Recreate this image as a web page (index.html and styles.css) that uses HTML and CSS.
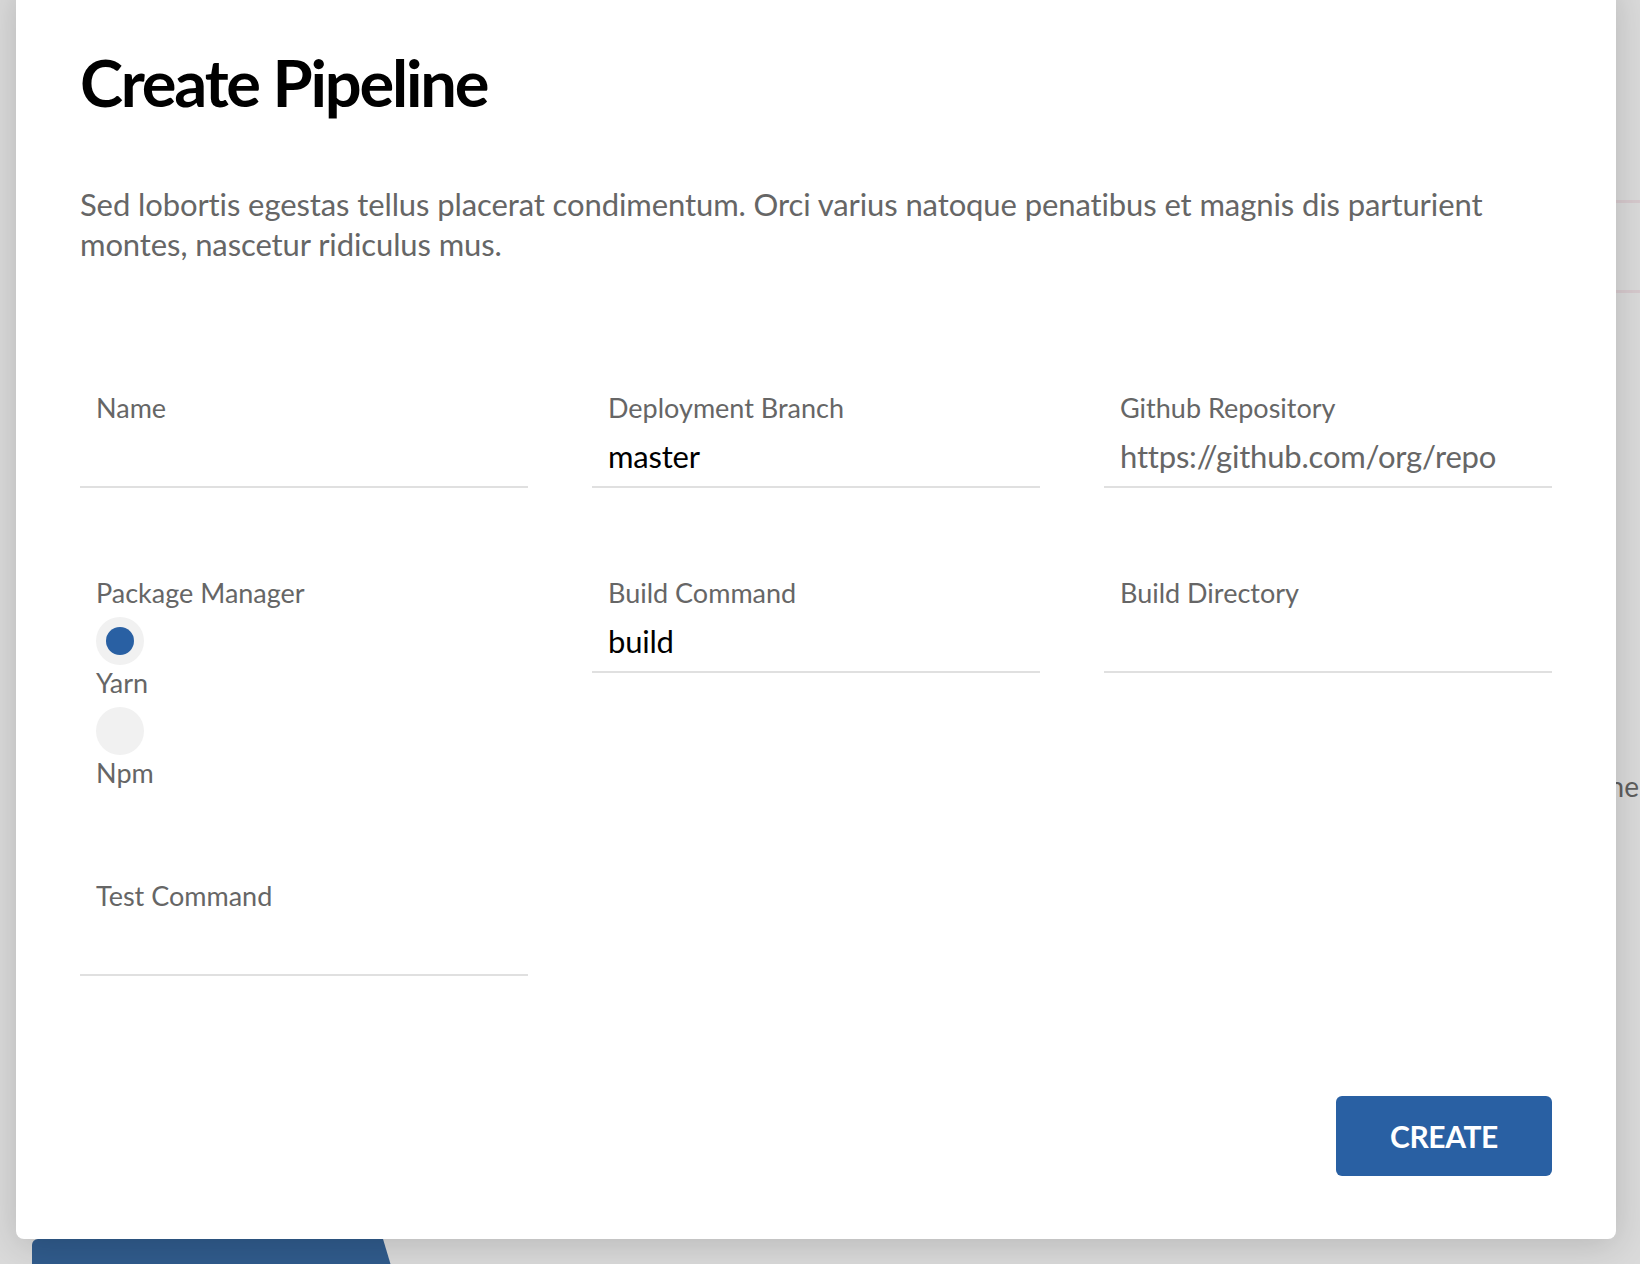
FILE: index.html
```html
<!DOCTYPE html>
<html lang="en">
<head>
<meta charset="utf-8">
<title>Create Pipeline</title>
<link rel="stylesheet" href="styles.css">
</head>
<body>
<div class="page">
  <div class="page-rows"></div>
  <div class="page-text">Pipeline</div>
  <div class="page-tab"></div>

  <div class="modal">
    <h1 class="modal-title">Create Pipeline</h1>
    <p class="modal-desc">Sed lobortis egestas tellus placerat condimentum. Orci varius natoque penatibus et magnis dis parturient montes, nascetur ridiculus mus.</p>

    <form class="form-grid">
      <div class="field">
        <label class="field-label">Name</label>
        <input class="field-input" type="text" value="">
      </div>
      <div class="field">
        <label class="field-label">Deployment Branch</label>
        <input class="field-input" type="text" value="master">
      </div>
      <div class="field">
        <label class="field-label">Github Repository</label>
        <input class="field-input" type="text" placeholder="https://github.com/org/repo">
      </div>

      <div class="field">
        <label class="field-label">Package Manager</label>
        <div class="radio-group">
          <div class="radio-item">
            <span class="radio radio-checked"><span class="radio-dot"></span></span>
            <span class="radio-label">Yarn</span>
          </div>
          <div class="radio-item">
            <span class="radio"></span>
            <span class="radio-label">Npm</span>
          </div>
        </div>
      </div>
      <div class="field">
        <label class="field-label">Build Command</label>
        <input class="field-input" type="text" value="build">
      </div>
      <div class="field">
        <label class="field-label">Build Directory</label>
        <input class="field-input" type="text" value="">
      </div>

      <div class="field">
        <label class="field-label">Test Command</label>
        <input class="field-input" type="text" value="">
      </div>
    </form>

    <div class="actions">
      <button class="btn-create" type="button">CREATE</button>
    </div>
  </div>
</div>
</body>
</html>
```

FILE: styles.css
```css
* { box-sizing: border-box; }

html, body {
  margin: 0;
  padding: 0;
}

body {
  background: #d9d9d9;
  font-family: Lato, "Open Sans", sans-serif;
  width: 1640px;
  height: 1264px;
  overflow: hidden;
}

.page {
  position: relative;
  width: 1640px;
  height: 1264px;
  overflow: hidden;
  background: #dadada;
}

/* dimmed page beneath the dialog */
.page-rows {
  margin: 200px 0 0 auto;
  width: 600px;
  height: 93px;
  border-top: 3px solid #d6c9cd;
  border-bottom: 3px solid #d6c9cd;
}

.page-text {
  margin-top: 475px;
  padding-right: 1px;
  text-align: right;
  font-size: 28px;
  line-height: 36px;
  color: #5e5e5e;
}

.page-tab {
  margin: 435px 0 0 32px;
  width: 360px;
  height: 40px;
  background: #305b8c;
  border-radius: 6px 6px 0 0;
  clip-path: polygon(0 0, 351px 0, 360px 30px, 360px 40px, 0 40px);
}

/* dialog */
.modal {
  position: absolute;
  left: 16px;
  top: -16px;
  width: 1600px;
  padding: 58px 64px 63px 64px;
  background: #fff;
  border-radius: 8px;
  box-shadow: 0 6px 36px rgba(0, 0, 0, 0.16);
}

.modal-title {
  margin: 0;
  font-size: 65px;
  line-height: 80px;
  font-weight: 700;
  color: #000;
  letter-spacing: -2.2px;
}

.modal-desc {
  margin: 62px 0 0 0;
  font-size: 31px;
  line-height: 40px;
  color: #666;
  letter-spacing: -0.1px;
}

.form-grid {
  margin-top: 126px;
  display: grid;
  grid-template-columns: repeat(3, 448px);
  column-gap: 64px;
  row-gap: 87px;
  align-items: start;
}

.field {
  display: flex;
  flex-direction: column;
}

.field-label {
  display: block;
  padding-left: 16px;
  font-size: 27px;
  line-height: 36px;
  color: #666;
}

.field-input {
  display: block;
  width: 100%;
  height: 62px;
  margin: 0;
  padding: 10px 16px 10px 16px;
  border: 0;
  border-bottom: 2px solid #e0e0e0;
  background: transparent;
  font-family: Lato, "Open Sans", sans-serif;
  font-size: 31px;
  line-height: 40px;
  color: #000;
  letter-spacing: -0.2px;
  outline: none;
}

.field-input::placeholder {
  color: #666;
  opacity: 1;
}

.radio-group {
  display: flex;
  flex-direction: column;
  gap: 6px;
  padding-top: 6px;
  padding-left: 16px;
}

.radio-item {
  display: flex;
  flex-direction: column;
  align-items: flex-start;
}

.radio {
  width: 48px;
  height: 48px;
  border-radius: 50%;
  background: #f1f1f1;
  display: flex;
  align-items: center;
  justify-content: center;
}

.radio-dot {
  width: 28px;
  height: 28px;
  border-radius: 50%;
  background: #2960a3;
}

.radio-label {
  font-size: 27px;
  line-height: 36px;
  color: #666;
}

.actions {
  margin-top: 120px;
  display: flex;
  justify-content: flex-end;
}

.btn-create {
  width: 216px;
  height: 80px;
  border: 0;
  border-radius: 6px;
  background: #2960a3;
  color: #fff;
  font-family: Lato, "Open Sans", sans-serif;
  font-size: 30px;
  font-weight: 700;
  letter-spacing: -0.4px;
  padding: 0;
}
```
